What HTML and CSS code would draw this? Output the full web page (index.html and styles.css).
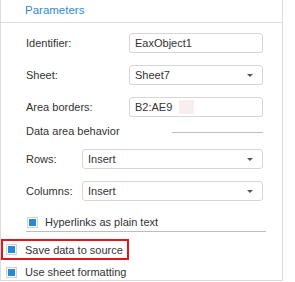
FILE: index.html
```html
<!DOCTYPE html>
<html lang="en">
<head>
    <meta charset="UTF-8">
    <title>Parameters</title>
    <link rel="stylesheet" href="styles.css">
</head>
<body>
    <div class="panel">
        <div class="head">Parameters</div>
        <div class="body">
            <div class="field">
                <label>Identifier:</label>
                <div class="input">EaxObject1</div>
            </div>
            <div class="field">
                <label>Sheet:</label>
                <div class="input select">Sheet7<span class="arrow"></span></div>
            </div>
            <div class="field gap13">
                <label>Area borders:</label>
                <div class="input">B2:AE9<span class="mark"></span></div>
            </div>
            <div class="group">
                <span>Data area behavior</span>
                <span class="rule"></span>
            </div>
            <div class="field short">
                <label>Rows:</label>
                <div class="input select">Insert<span class="arrow"></span></div>
            </div>
            <div class="field short">
                <label>Columns:</label>
                <div class="input select">Insert<span class="arrow"></span></div>
            </div>
            <div class="check inner"><span class="box"></span>Hyperlinks as plain text</div>
        </div>
        <div class="check hl"><span class="box"></span>Save data to source</div>
        <div class="check last"><span class="box"></span>Use sheet formatting</div>
    </div>
</body>
</html>
```

FILE: styles.css
```css
*{
    margin: 0;
    padding: 0;
    box-sizing: border-box;
}

body{
    font-family: "Liberation Sans", Arial, sans-serif;
    font-size: 11px;
    color: #333;
    background: #fff;
}

.panel{
    width: 283px;
    height: 281px;
    border: 1px solid #dcdcdc;
    border-top: none;
}

.head{
    height: 23px;
    line-height: 20px;
    padding-left: 24px;
    color: #2f8ad6;
    font-size: 11.5px;
    border-bottom: 1px solid #dcdcdc;
}

.body{
    padding: 10px 19px 0 25px;
}

.field{
    display: flex;
    align-items: center;
    height: 20px;
    margin-bottom: 12px;
}
.field.gap13{
    margin-top: 1px;
    margin-bottom: 4px;
}
.field label{
    width: 103px;
    flex: none;
}
.field.short label{
    width: 56px;
}

.input{
    flex: 1;
    height: 20px;
    border: 1px solid #d6d6d6;
    border-radius: 3px;
    padding-left: 5px;
    display: flex;
    align-items: center;
    position: relative;
}
.select .arrow{
    position: absolute;
    right: 9px;
    top: 8px;
    border-left: 3px solid transparent;
    border-right: 3px solid transparent;
    border-top: 3px solid #555;
}
.mark{
    width: 15px;
    height: 14px;
    background: #f8eeee;
    margin-left: 7px;
}

.group{
    display: flex;
    align-items: center;
    height: 20px;
    margin-bottom: 8px;
}
.group .rule{
    flex: 1;
    height: 1px;
    background: #bdbdbd;
    margin-left: 52px;
    margin-top: 2px;
}

.check{
    display: flex;
    align-items: center;
}
.box{
    width: 11px;
    height: 11px;
    border: 1px solid #d2d2d2;
    padding: 1px;
    background: #2a8ad6;
    background-clip: content-box;
    margin-right: 8px;
    flex: none;
}
.check.inner{
    height: 19px;
    margin-top: 12px;
    margin-right: -3px;
    padding-left: 1px;
    border-bottom: 1px solid #bdbdbd;
}
.check.inner .box{
    margin-right: 7px;
}
.check.hl{
    width: 128px;
    height: 21px;
    margin-top: 7px;
    border: 2px solid #e3141b;
    padding-left: 3px;
}
.check.last{
    height: 14px;
    margin-top: 5px;
    padding-left: 5px;
}
```
